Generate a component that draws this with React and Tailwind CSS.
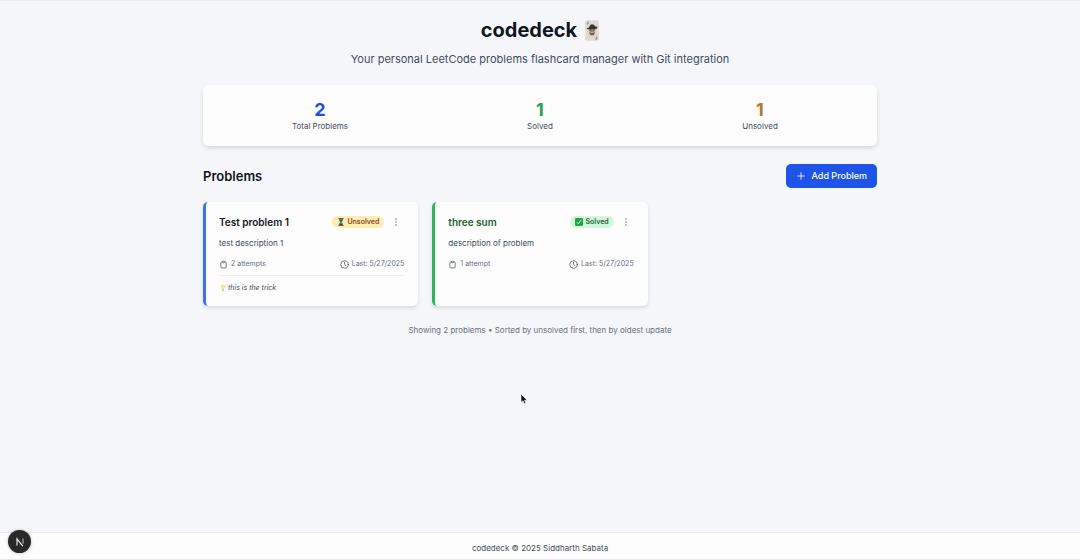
import React from "react";

const stats = [
  { label: "Total Problems", value: 2, color: "text-[#1d50e0]" },
  { label: "Solved", value: 1, color: "text-[#2ca24c]" },
  { label: "Unsolved", value: 1, color: "text-[#bd7430]" },
];

const problems = [
  {
    title: "Test problem 1",
    description: "test description 1",
    attempts: "2 attempts",
    last: "5/27/2025",
    trick: "this is the trick",
    solved: false,
  },
  {
    title: "three sum",
    description: "description of problem",
    attempts: "1 attempt",
    last: "5/27/2025",
    solved: true,
  },
];

function JokerCard() {
  return (
    <svg viewBox="0 0 14 21" className="h-[21px] w-3.5" aria-hidden="true">
      <rect x="0.2" y="0.2" width="13.6" height="20.6" rx="1.8" fill="#e3d9cd" />
      <path d="M3 1.6v2.1q-.6.8-1.3.2M11.8 16.6v2.2q-.7.9-1.5.1" fill="none" stroke="#555" strokeWidth="0.7" />
      <path d="M1.6 8.2q2.5.2 3-2.3 1.7-3 4.5-.9 1.2 2.2 3.5 1.8-.5 2.4-2.6 2.6H4.2q-1.6.5-2.6-1.2z" fill="#33363a" />
      <path d="M4.3 9.3h5.4v2.3q-2.7 2-5.4 0z" fill="#9c9086" />
      <path d="M4.7 10h1.6M7.8 10h1.6" stroke="#222" strokeWidth="0.9" />
      <path d="M3.8 11.8l3.3.9 3.3-.9-.6 1.9H4.4z" fill="#d9783e" />
      <path d="M4.4 13.3h5.4l-1.1 1.9H5.5z" fill="#59606a" />
    </svg>
  );
}

function Hourglass() {
  return (
    <svg viewBox="0 0 8 9" className="h-2 w-2" aria-hidden="true">
      <path d="M1.8 1h4.4v1.7L4.8 4.5l1.4 1.8V8H1.8V6.3l1.4-1.8-1.4-1.8z" fill="#77818a" />
      <path d="M2.4 2.2h3.2L4 4.2zM2.4 7.8L4 6l1.6 1.8z" fill="#3e4449" />
      <path d="M1 .7h6M1 8.3h6" stroke="#50483f" strokeWidth="1.1" />
    </svg>
  );
}

function CheckMark() {
  return (
    <svg viewBox="0 0 8 8" className="h-2 w-2" aria-hidden="true">
      <rect width="8" height="8" rx="1.2" fill="#22a447" />
      <path d="M1.9 4.2l1.5 1.7L6.2 1.8" fill="none" stroke="#c5f4d2" strokeWidth="0.9" />
    </svg>
  );
}

function Bulb() {
  return (
    <svg viewBox="0 0 7 9" className="h-2 w-2" aria-hidden="true">
      <path d="M2.3 6Q.7 4.6 1 2.8 1.4.8 3.7.7 6 .8 6.2 2.8 6.2 4.7 4.4 6z" fill="#fbe498" />
      <path d="M2.7 3l1 .8.8-.8M3.5 3.8V6" fill="none" stroke="#e9cf81" strokeWidth="0.4" />
      <path d="M2.4 6.2h1.8v1.7H2.7z" fill="#a3a6aa" />
    </svg>
  );
}

function Clipboard() {
  return (
    <svg viewBox="0 0 24 24" className="h-[9px] w-[9px]" fill="none" stroke="currentColor" strokeWidth="2.4" strokeLinecap="round" strokeLinejoin="round" aria-hidden="true">
      <path d="M9 5H7a2 2 0 00-2 2v12a2 2 0 002 2h10a2 2 0 002-2V7a2 2 0 00-2-2h-2M9 5a2 2 0 002 2h2a2 2 0 002-2M9 5a2 2 0 012-2h2a2 2 0 012 2" />
    </svg>
  );
}

function Clock() {
  return (
    <svg viewBox="0 0 24 24" className="h-[9px] w-[9px]" fill="none" stroke="currentColor" strokeWidth="2.4" strokeLinecap="round" strokeLinejoin="round" aria-hidden="true">
      <circle cx="12" cy="12" r="10" />
      <path d="M12 6v6l4 3" />
    </svg>
  );
}

function ProblemCard({ problem }) {
  const { solved } = problem;
  return (
    <article
      className={`rounded-[5px] border-l-3 bg-[#fdfdfd] pt-[11px] pr-3.5 pb-3 pl-[13px] shadow-[0_2px_4px_rgba(0,0,0,0.12)] ${
        solved ? "border-[#2cb659]" : "border-[#3b75df]"
      }`}
    >
      <div className="flex items-center justify-between">
        <h3 className={`text-[10px] leading-[18px] font-semibold ${solved ? "text-[#1c5e32]" : "text-[#11151d]"}`}>
          {problem.title}
        </h3>
        <div className="flex items-center gap-1">
          <span
            className={`flex h-3 items-center gap-0.5 rounded-full px-[5px] text-[7px] font-semibold ${
              solved ? "bg-[#d1f8dc] text-[#266238]" : "bg-[#fbedb4] text-[#8c481e]"
            }`}
          >
            {solved ? <CheckMark /> : <Hourglass />}
            {solved ? "Solved" : "Unsolved"}
          </span>
          <button type="button" aria-label={`Options for ${problem.title}`} className="flex h-3 w-4 items-center justify-center text-[#767b84]">
            <svg viewBox="0 0 12 12" className="h-3 w-3" fill="currentColor" aria-hidden="true">
              <circle cx="6" cy="3" r="0.8" />
              <circle cx="6" cy="6" r="0.8" />
              <circle cx="6" cy="9" r="0.8" />
            </svg>
          </button>
        </div>
      </div>
      <p className="mt-1.5 text-[8px] leading-3 text-[#414b5a]">{problem.description}</p>
      <div className="mt-[9px] flex items-center justify-between text-[7px] leading-3 text-[#68707d]">
        <span className="flex items-center gap-[3px]">
          <Clipboard />
          {problem.attempts}
        </span>
        <span className="flex items-center gap-[3px]">
          <Clock />
          Last: {problem.last}
        </span>
      </div>
      {problem.trick && (
        <p className="mt-[5px] flex items-center gap-px border-t border-[#eff0f2] pt-1.5 text-[7px] leading-3 text-[#454e5c] italic">
          <Bulb />
          {problem.trick}
        </p>
      )}
    </article>
  );
}

export default function App() {
  return (
    <div className="flex min-h-screen flex-col border-t border-[#e8eaee] bg-[#f5f7fb] font-['Inter',sans-serif] text-[#11151d]">
      <main className="mx-auto w-full max-w-[674px] flex-1 pt-[15px]">
        <header className="text-center">
          <h1 className="flex items-center justify-center gap-2 text-[20px] leading-7 font-bold">
            codedeck <JokerCard />
          </h1>
          <p className="mt-1.5 text-[11px] leading-[18px] text-[#434c5b]">
            Your personal LeetCode problems flashcard manager with Git integration
          </p>
        </header>

        <section aria-label="Statistics" className="mt-[17px] grid grid-cols-3 gap-3.5 rounded-[5px] bg-[#fdfdfd] px-3.5 pt-[15px] pb-3.5 text-center shadow-[0_2px_4px_rgba(0,0,0,0.14)]">
          {stats.map((stat) => (
            <div key={stat.label}>
              <div className={`text-[18px] leading-5 font-bold ${stat.color}`}>{stat.value}</div>
              <div className="text-[8px] leading-3 text-[#454e5c]">{stat.label}</div>
            </div>
          ))}
        </section>

        <div className="mt-[18px] flex items-center justify-between">
          <h2 className="text-[13px] leading-6 font-semibold">Problems</h2>
          <button type="button" className="flex h-6 items-center gap-1.5 rounded-[5px] bg-[#1e55e8] px-2.5 text-[9px] font-medium text-white">
            <svg viewBox="0 0 24 24" className="h-2.5 w-2.5" fill="none" stroke="currentColor" strokeWidth="2" strokeLinecap="round" aria-hidden="true">
              <path d="M12 4v16M4 12h16" />
            </svg>
            Add Problem
          </button>
        </div>

        <div className="mt-3.5 grid grid-cols-3 gap-3.5">
          {problems.map((problem) => (
            <ProblemCard key={problem.title} problem={problem} />
          ))}
        </div>

        <p className="mt-[18px] text-center text-[8px] leading-3 text-[#68707d]">
          Showing 2 problems • Sorted by unsolved first, then by oldest update
        </p>
      </main>

      <footer className="border-y border-[#e8eaee] bg-[#fdfdfd] pt-[9px] pb-[5px] text-center text-[8px] leading-3 text-[#454e5c]">
        codedeck © 2025 Siddharth Sabata
      </footer>

      <button
        type="button"
        aria-label="Open developer tools"
        className="fixed bottom-[7px] left-2 flex h-[23px] w-[23px] items-center justify-center rounded-full bg-[#292929] shadow-[0_0_3px_rgba(0,0,0,0.3)]"
      >
        <svg viewBox="0 0 12 12" className="h-3 w-3" fill="none" aria-hidden="true">
          <path d="M3 9.4V2.8L8.8 10.1" stroke="#f4f4f4" strokeWidth="1.1" />
          <path d="M9 2.5v5.2" stroke="#bcbcbc" strokeWidth="1.1" />
        </svg>
      </button>

      <svg viewBox="0 0 8 12" className="pointer-events-none fixed top-[393px] left-[520px] h-3 w-2" aria-hidden="true">
        <path d="M1 1v8.5l2-1.8 1.3 3 1.5-.7-1.3-2.8h2.7z" fill="#111" stroke="#fff" strokeWidth="0.6" />
      </svg>
    </div>
  );
}
